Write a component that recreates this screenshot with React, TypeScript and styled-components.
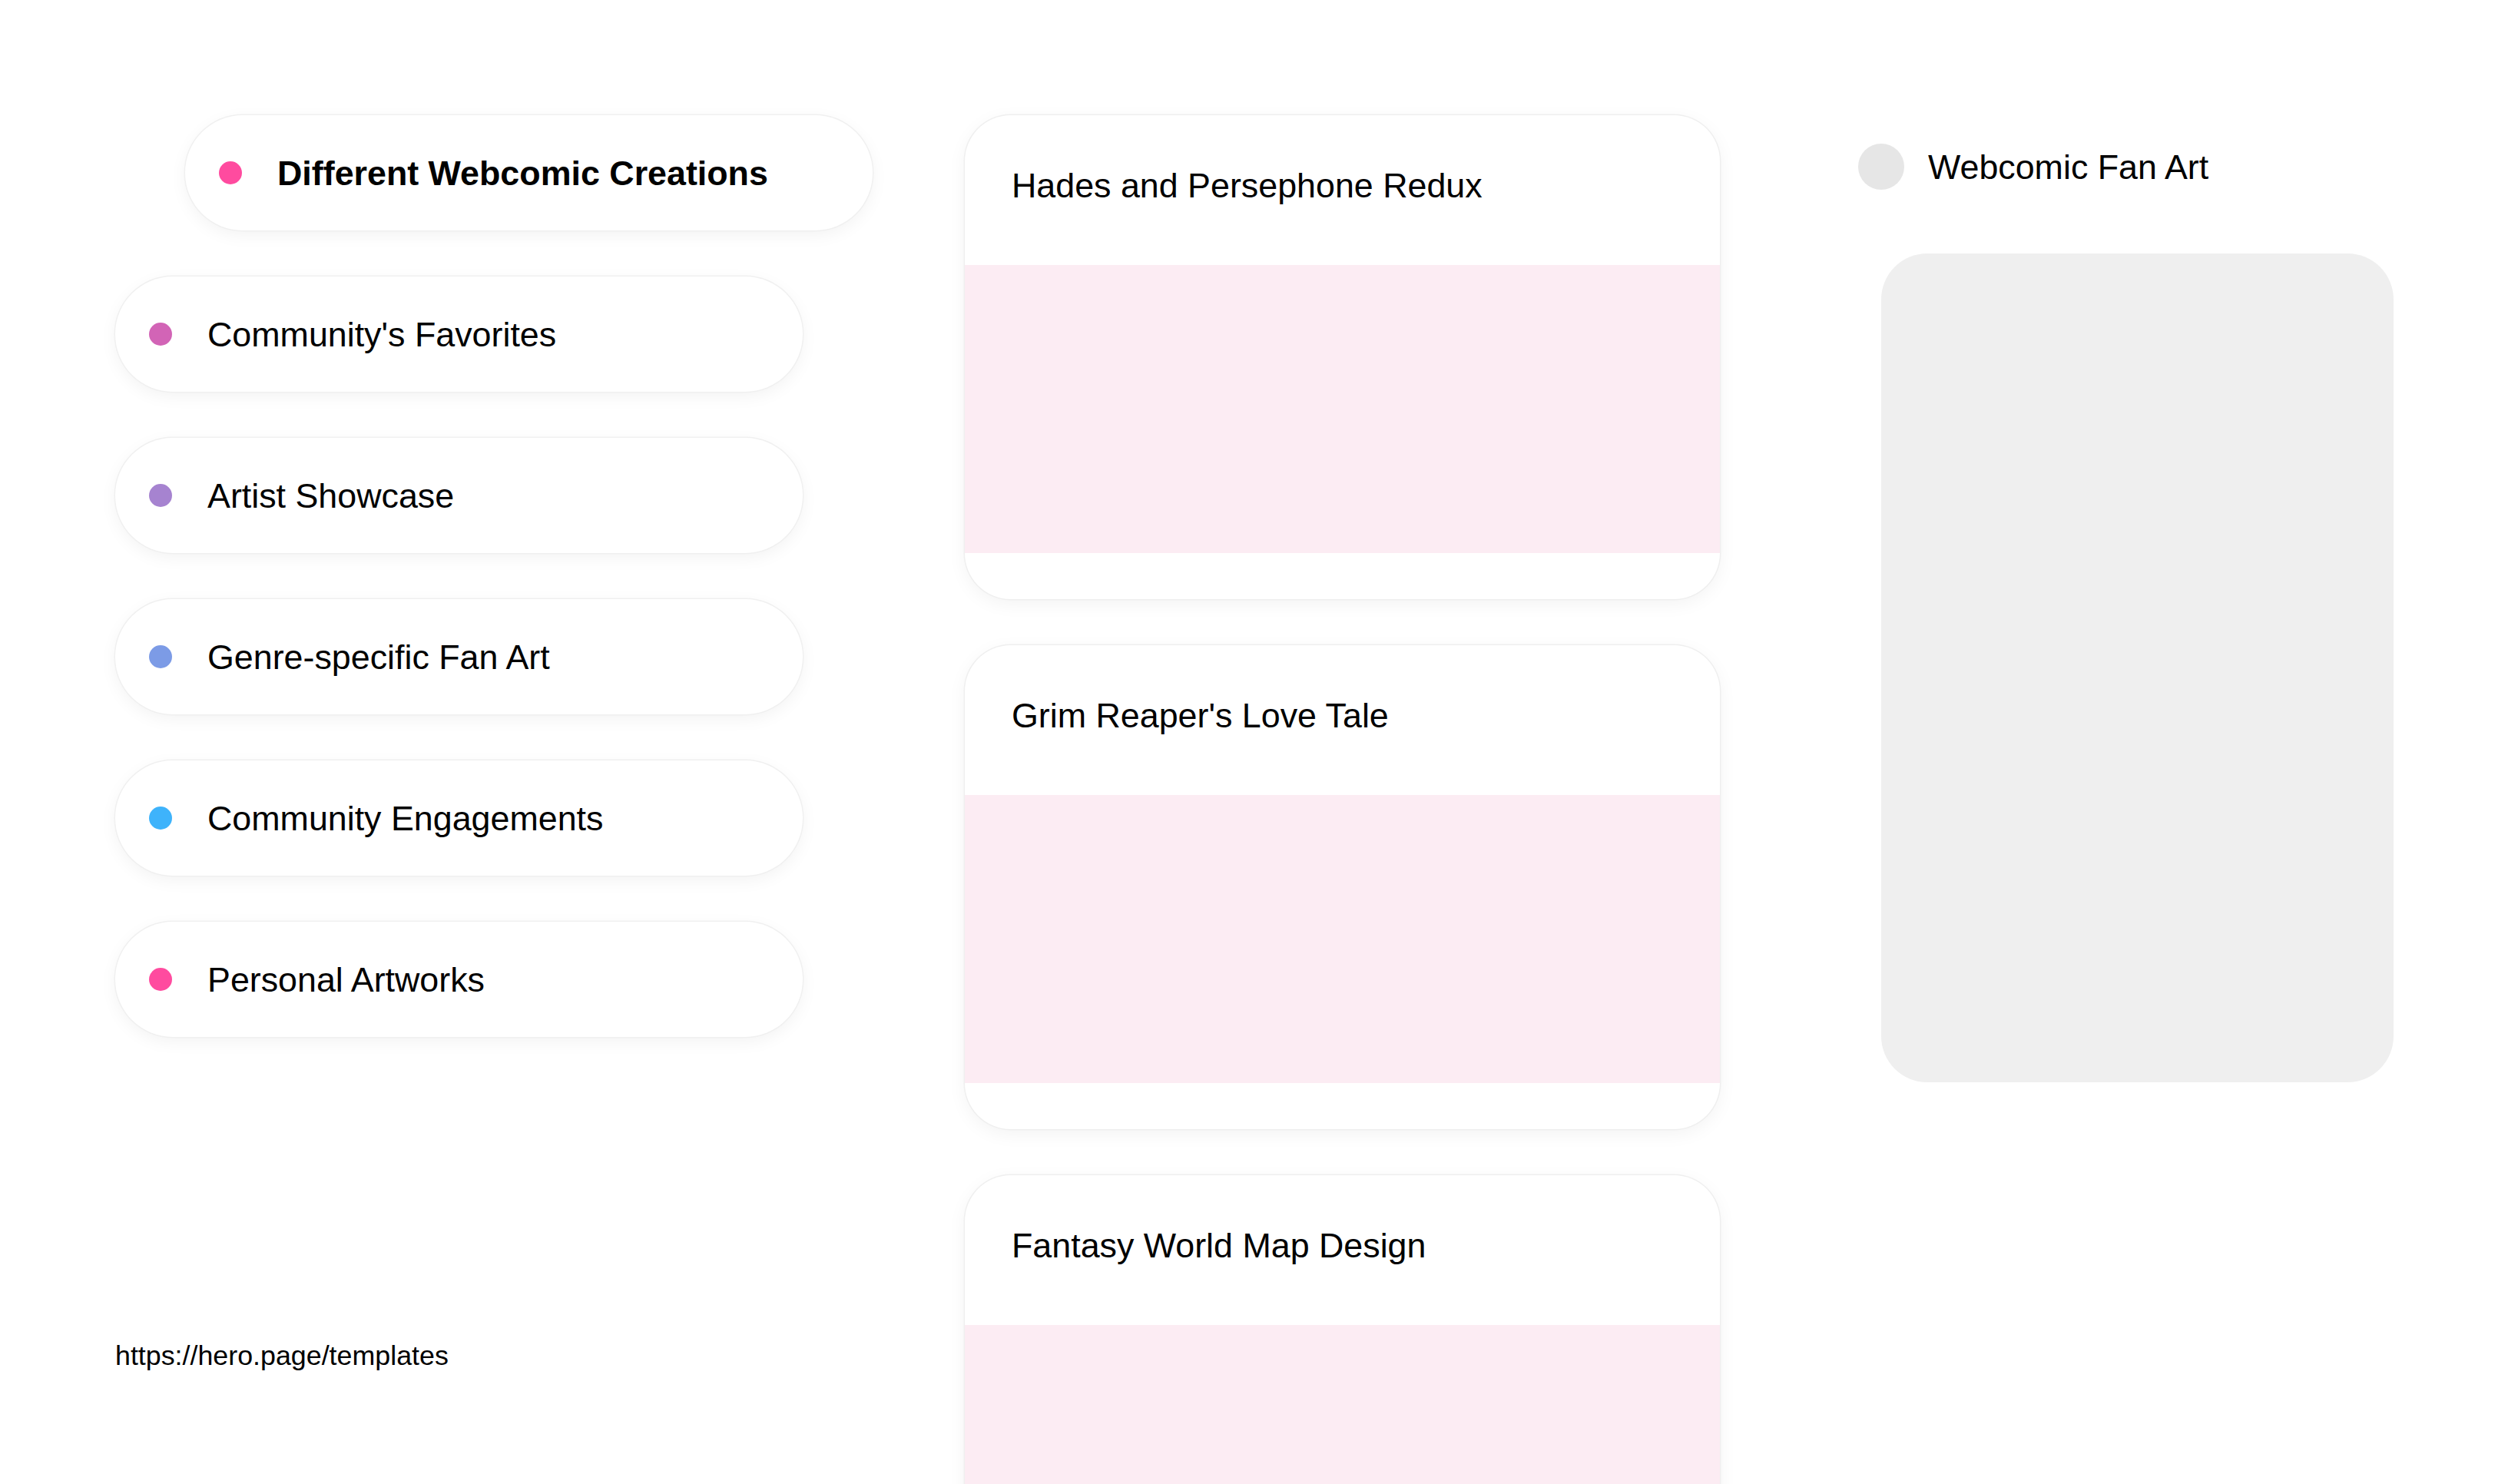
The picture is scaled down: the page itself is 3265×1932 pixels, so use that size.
import React from "react";
import styled, { createGlobalStyle } from "styled-components";

const GlobalStyle = createGlobalStyle`
  html, body {
    margin: 0;
    padding: 0;
    background: #ffffff;
    overflow: hidden;
  }
  body {
    font-family: "Liberation Sans", Arial, sans-serif;
    color: #000000;
  }
  * { box-sizing: border-box; }
`;

const Page = styled.div`
  display: flex;
  align-items: flex-start;
  padding: 150px 0 0 150px;
  width: 3265px;
  height: 1932px;
  overflow: hidden;
`;

const LeftColumn = styled.nav`
  display: flex;
  flex-direction: column;
  gap: 60px;
  width: 895px;
  margin-right: 211px;
  flex-shrink: 0;
`;

const Pill = styled.div<{ $indent?: boolean }>`
  display: flex;
  align-items: center;
  gap: 46px;
  height: 150px;
  width: 895px;
  margin-left: ${(p) => (p.$indent ? "91px" : "0")};
  padding-left: 44px;
  border-radius: 75px;
  background: #ffffff;
  box-shadow: 0 0 0 1.5px #f0f0f0, 0 6px 22px rgba(0, 0, 0, 0.05);
`;

const Dot = styled.span<{ $color: string }>`
  width: 30px;
  height: 30px;
  border-radius: 50%;
  background: ${(p) => p.$color};
  flex-shrink: 0;
`;

const PillLabel = styled.span<{ $bold?: boolean }>`
  font-size: 44.8px;
  font-weight: ${(p) => (p.$bold ? 700 : 400)};
  line-height: 1;
  white-space: nowrap;
`;

const Url = styled.div`
  margin-top: 335px;
  font-size: 35.8px;
  line-height: 41px;
`;

const MiddleColumn = styled.main`
  display: flex;
  flex-direction: column;
  gap: 60px;
  width: 983px;
  margin-right: 180px;
  flex-shrink: 0;
`;

const Card = styled.article`
  display: flex;
  flex-direction: column;
  height: 630px;
  border-radius: 60px;
  overflow: hidden;
  background: #ffffff;
  box-shadow: 0 0 0 1.5px #efefef, 0 6px 24px rgba(0, 0, 0, 0.05);
  flex-shrink: 0;
`;

const CardHeader = styled.header`
  height: 195px;
  padding: 58px 61px 0;
`;

const CardTitle = styled.h3`
  margin: 0;
  font-size: 44.8px;
  font-weight: 400;
  line-height: 1.5;
  white-space: nowrap;
`;

const CardImage = styled.div`
  height: 375px;
  background: #fcecf3;
`;

const RightColumn = styled.aside`
  display: flex;
  flex-direction: column;
  width: 697px;
  padding-top: 37px;
  flex-shrink: 0;
`;

const ProfileRow = styled.div`
  display: flex;
  align-items: center;
  gap: 31px;
  height: 60px;
`;

const Avatar = styled.span`
  width: 60px;
  height: 60px;
  border-radius: 50%;
  background: #e6e6e6;
  flex-shrink: 0;
`;

const ProfileName = styled.span`
  font-size: 44.8px;
  line-height: 1;
  white-space: nowrap;
`;

const Preview = styled.div`
  margin: 83px 0 0 30px;
  width: 667px;
  height: 1079px;
  border-radius: 60px;
  background: #efefef;
`;

const categories = [
  { label: "Community's Favorites", color: "#d264b6" },
  { label: "Artist Showcase", color: "#a683d0" },
  { label: "Genre-specific Fan Art", color: "#7c9be6" },
  { label: "Community Engagements", color: "#3eb3fb" },
  { label: "Personal Artworks", color: "#ff4b9f" },
];

const cards = [
  "Hades and Persephone Redux",
  "Grim Reaper's Love Tale",
  "Fantasy World Map Design",
];

export default function App() {
  return (
    <>
      <GlobalStyle />
      <Page>
        <LeftColumn>
          <Pill $indent>
            <Dot $color="#ff4b9f" />
            <PillLabel $bold>Different Webcomic Creations</PillLabel>
          </Pill>
          {categories.map((c) => (
            <Pill key={c.label}>
              <Dot $color={c.color} />
              <PillLabel>{c.label}</PillLabel>
            </Pill>
          ))}
          <Url>https://hero.page/templates</Url>
        </LeftColumn>
        <MiddleColumn>
          {cards.map((t) => (
            <Card key={t}>
              <CardHeader>
                <CardTitle>{t}</CardTitle>
              </CardHeader>
              <CardImage />
            </Card>
          ))}
        </MiddleColumn>
        <RightColumn>
          <ProfileRow>
            <Avatar />
            <ProfileName>Webcomic Fan Art</ProfileName>
          </ProfileRow>
          <Preview />
        </RightColumn>
      </Page>
    </>
  );
}
